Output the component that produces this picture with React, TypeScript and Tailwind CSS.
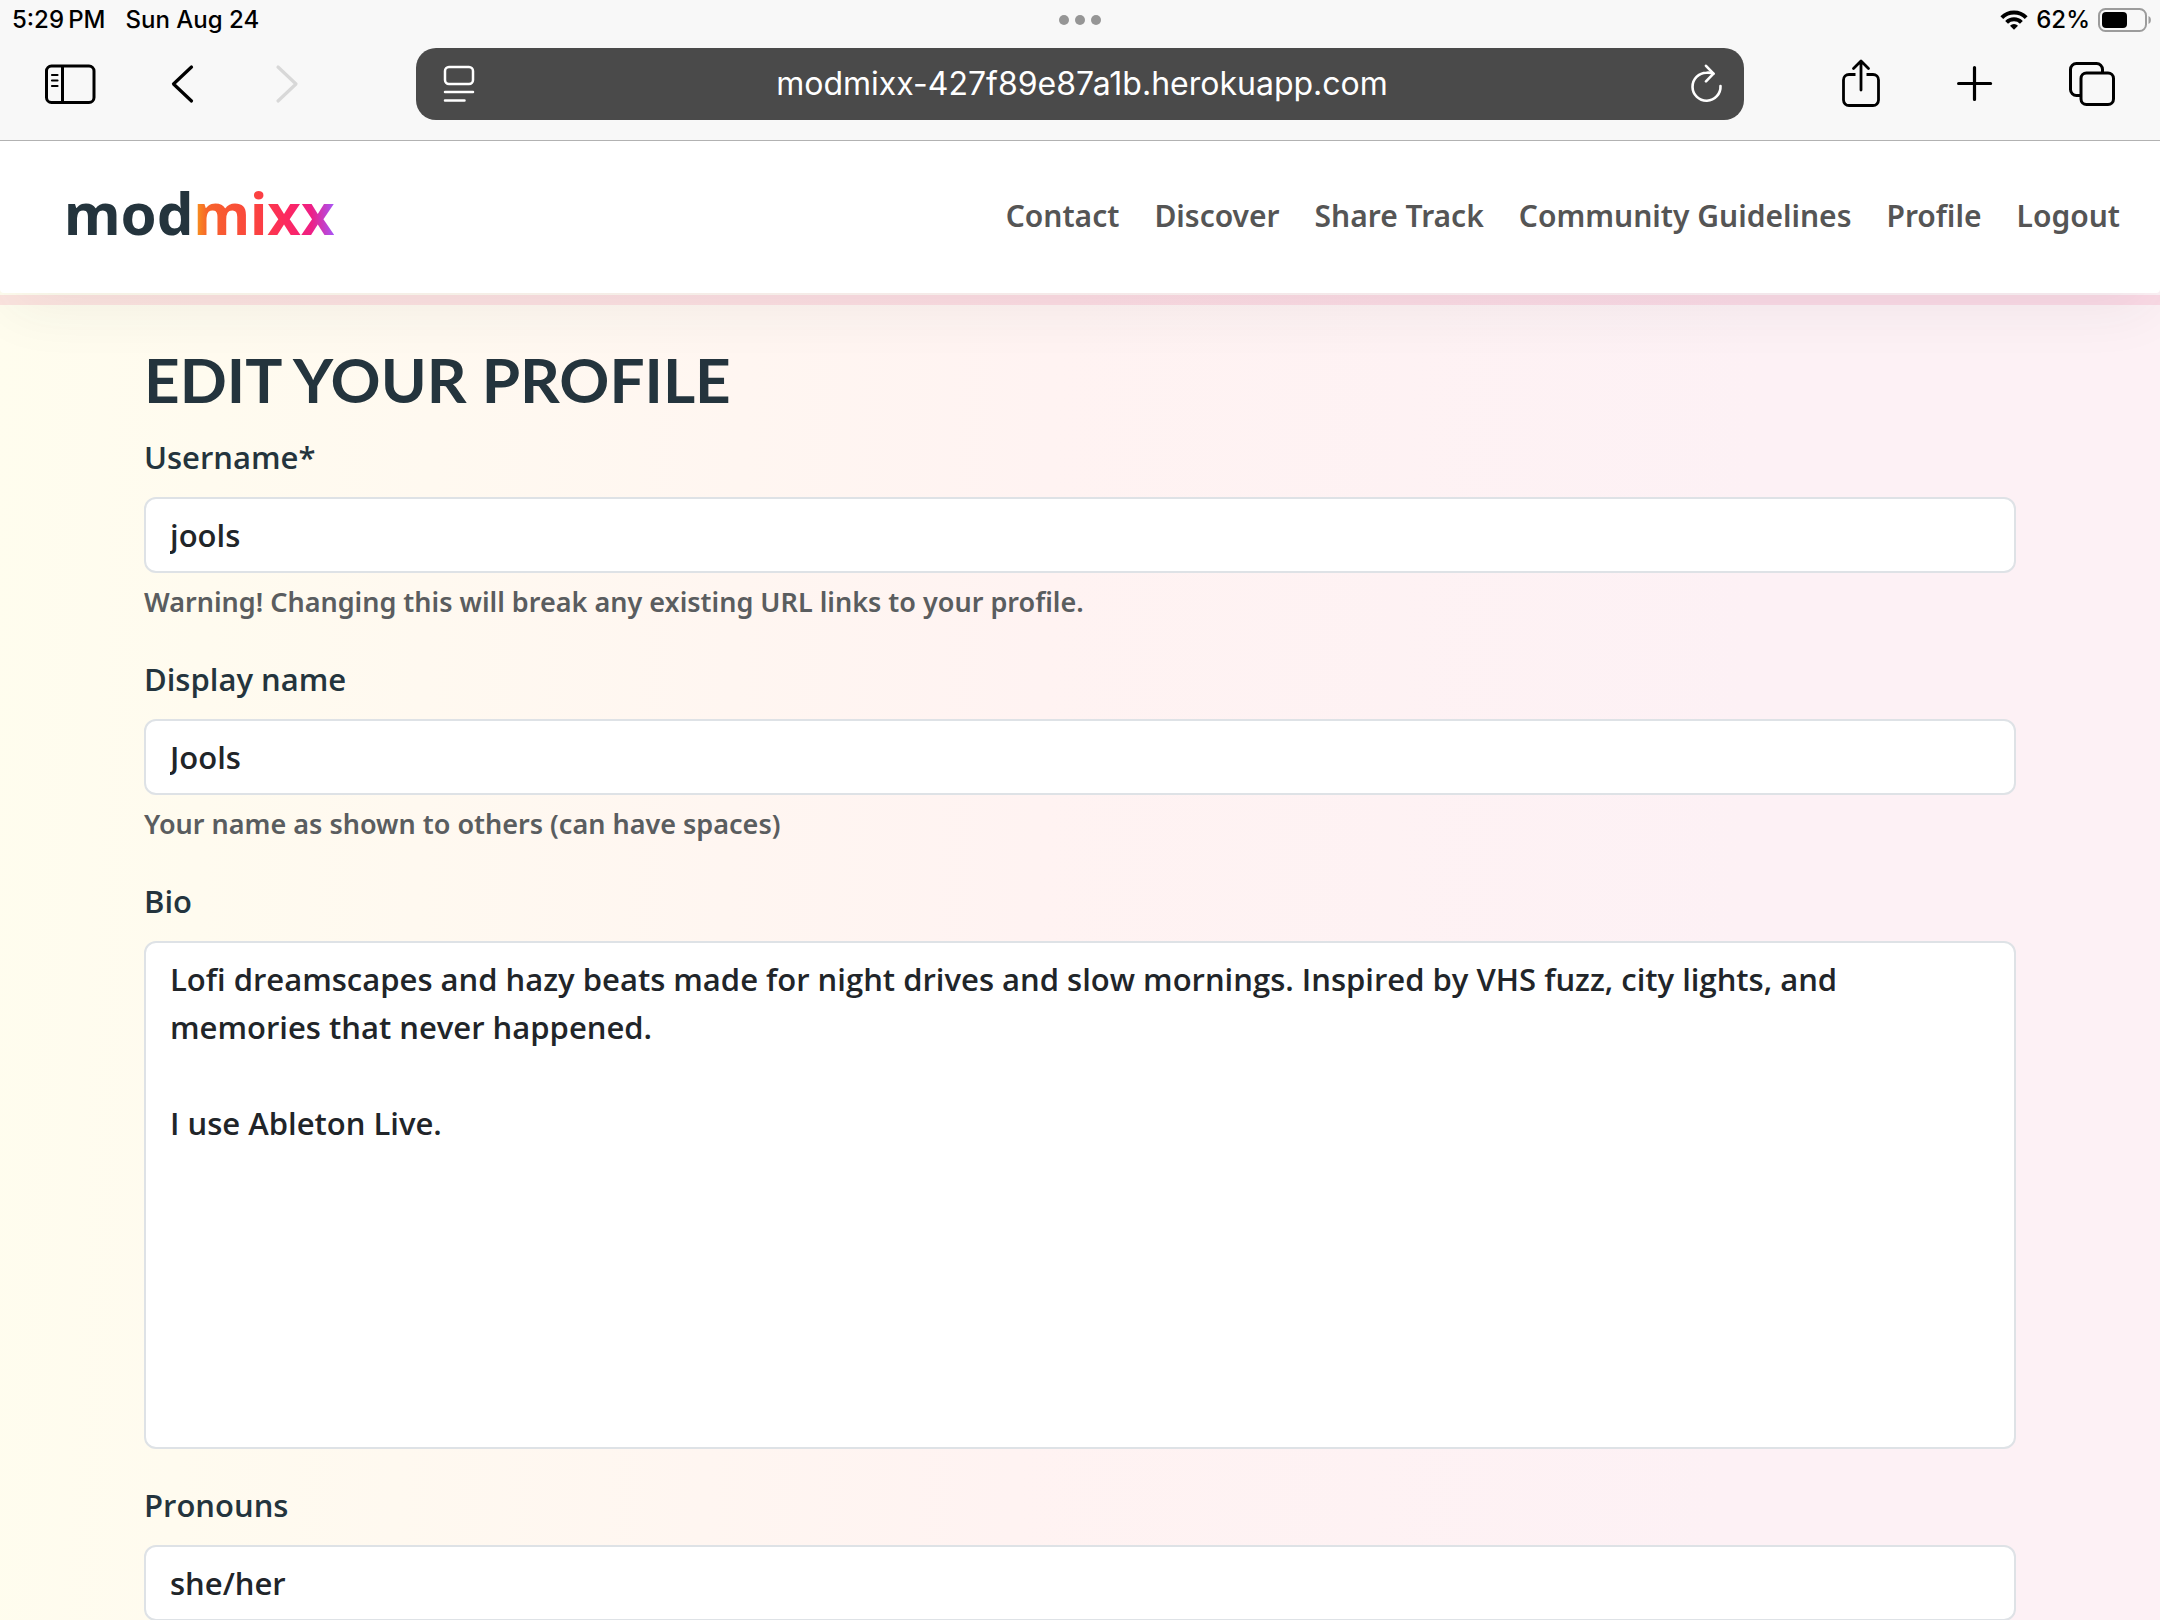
import type { ReactNode } from "react";

const bio = `Lofi dreamscapes and hazy beats made for night drives and slow mornings. Inspired by VHS fuzz, city lights, and memories that never happened.

I use Ableton Live.`;

const navLinks = ["Contact", "Discover", "Share Track", "Community Guidelines", "Profile", "Logout"];

const controlClass =
  "block w-full rounded-xl border-2 border-[#dee2e6] bg-white px-6 py-3 text-[31px] leading-[48px] font-semibold text-[#212529] outline-none";

function StatusBar() {
  return (
    <div className="grid h-10 grid-cols-3 items-center text-2xl font-medium text-black">
      <div className="flex gap-5 pl-3">
        <span>5:29&#8201;PM</span>
        <span>Sun Aug 24</span>
      </div>
      <div className="flex justify-center gap-1.5">
        <span className="size-2.5 rounded-full bg-[#969696]" />
        <span className="size-2.5 rounded-full bg-[#969696]" />
        <span className="size-2.5 rounded-full bg-[#969696]" />
      </div>
      <div className="flex items-center justify-end gap-2 pr-2">
        <svg width="28" height="20" viewBox="0 0 28 20" aria-hidden="true">
          <g fill="none" stroke="#000" strokeWidth="4">
            <path d="M1.8 7.6a17.3 17.3 0 0 1 24.4 0" />
            <path d="M6.6 12.4a10.5 10.5 0 0 1 14.8 0" />
          </g>
          <path d="M14 19.8l-4-4.1a5.7 5.7 0 0 1 8 0z" fill="#000" />
        </svg>
        <span>62%</span>
        <svg width="54" height="24" viewBox="0 0 54 24" aria-hidden="true">
          <rect x="1" y="1" width="47" height="22" rx="6.5" fill="none" stroke="#9c9c9c" strokeWidth="2" />
          <rect x="4" y="4" width="25" height="16" rx="4" fill="#000" />
          <path d="M50.500 8c3.2 1.2 3.2 6.800 0 8z" fill="#9c9c9c" />
        </svg>
      </div>
    </div>
  );
}

function IconButton({ label, children, disabled }: { label: string; children: ReactNode; disabled?: boolean }) {
  return (
    <button type="button" aria-label={label} disabled={disabled} className="shrink-0">
      {children}
    </button>
  );
}

function Toolbar() {
  return (
    <div className="grid grid-cols-[416px_1fr_416px] items-center pt-2 pb-5">
      <div className="flex items-center gap-[68px] pl-11">
        <IconButton label="Show sidebar">
          <svg width="52" height="40" viewBox="0 0 52 40" fill="none" stroke="#000" strokeWidth="3" strokeLinecap="round">
            <rect x="2.500" y="2" width="47.500" height="36.500" rx="5" />
            <path d="M18.500 2v36.500" strokeLinecap="butt" />
            <path d="M8 11h5.500M8 16.500h5.500M8 22h5.500" strokeWidth="2.200" />
          </svg>
        </IconButton>
        <IconButton label="Back">
          <svg width="36" height="40" viewBox="0 0 36 40" fill="none" stroke="#000" strokeWidth="3.200" strokeLinecap="round" strokeLinejoin="round">
            <path d="M27.500 3L9.500 20l18 17" />
          </svg>
        </IconButton>
        <IconButton label="Forward" disabled>
          <svg width="36" height="40" viewBox="0 0 36 40" fill="none" stroke="#d8d8d8" strokeWidth="3.200" strokeLinecap="round" strokeLinejoin="round">
            <path d="M10 3l18 17-18 17" />
          </svg>
        </IconButton>
      </div>
      <div className="flex h-[72px] items-center rounded-[20px] bg-[#4a4a4a] pr-5 pl-6 text-white">
        <IconButton label="Page menu">
          <svg width="36" height="40" viewBox="0 0 36 40" fill="none" stroke="#fff" strokeWidth="2.500" strokeLinecap="round">
            <rect x="5" y="3" width="28" height="17" rx="4" />
            <path d="M5 28h28M5 36.500h19.500" />
          </svg>
        </IconButton>
        <input
          aria-label="Address"
          defaultValue="modmixx-427f89e87a1b.herokuapp.com"
          className="min-w-0 flex-1 bg-transparent text-center text-[32px] leading-10 outline-none"
        />
        <IconButton label="Reload">
          <svg width="36" height="40" viewBox="0 0 36 40" fill="none" stroke="#fff" strokeWidth="2.600" strokeLinecap="round" strokeLinejoin="round">
            <path d="M25.500 9.600C23.500 8.800 21 8.500 18.500 8.700A14 14 0 1 0 32.500 22" />
            <path d="M18 1.800l7.500 7.800-7.500 7.800" />
          </svg>
        </IconButton>
      </div>
      <div className="flex items-center justify-end gap-[76px] pr-[45px]">
        <IconButton label="Share">
          <svg width="40" height="50" viewBox="0 0 40 50" fill="none" stroke="#000" strokeWidth="2.800" strokeLinecap="round" strokeLinejoin="round">
            <path d="M14.500 15.500H8a5.500 5.500 0 0 0-5.500 5.500v20A5.500 5.500 0 0 0 8 46.500h24a5.500 5.500 0 0 0 5.500-5.500V21a5.500 5.500 0 0 0-5.500-5.500h-6.500" strokeLinecap="butt" />
            <path d="M20 31V2.500M12.500 9.500L20 2l7.500 7.500" />
          </svg>
        </IconButton>
        <IconButton label="New tab">
          <svg width="36" height="40" viewBox="0 0 36 40" fill="none" stroke="#000" strokeWidth="3.200" strokeLinecap="round">
            <path d="M17.500 3.500v32M1.600 19.500h32" />
          </svg>
        </IconButton>
        <IconButton label="Tabs">
          <svg width="46" height="44" viewBox="0 0 46 44" fill="none" stroke="#000" strokeWidth="3">
            <path d="M12 33.500H7.500a6 6 0 0 1-6-6v-20a6 6 0 0 1 6-6h20a6 6 0 0 1 6 6V11" />
            <rect x="12" y="11" width="32.500" height="31.500" rx="5.500" />
          </svg>
        </IconButton>
      </div>
    </div>
  );
}

function SiteHeader() {
  return (
    <header className="relative z-10 flex items-center justify-between rounded-b-sm bg-white pr-10 pl-16 shadow-[0_24px_60px_-10px_rgba(40,60,60,0.07)]">
      <a href="#home" className="pt-7 pb-9 font-['Noto_Sans',sans-serif] text-[58px] leading-[88px] font-bold text-[#24343d]">
        mod
        <span className="bg-[linear-gradient(90deg,#f7a01a_0%,#f7642b_10%,#fb4240_45%,#fc2762_68%,#ee1f85_84%,#a855f7_100%)] bg-clip-text text-transparent">
          mixx
        </span>
      </a>
      <nav className="flex gap-[35px] font-['Noto_Sans',sans-serif] text-[30px] leading-[46px] font-semibold text-[#555]">
        {navLinks.map((link) => (
          <a key={link} href="#nav" className="pb-0.5">
            {link}
          </a>
        ))}
      </nav>
      <div className="absolute inset-x-0 top-full mt-0.5 h-2.5 bg-[rgba(235,60,120,0.13)]" />
    </header>
  );
}

function Field({ id, label, help, children }: { id: string; label: string; help?: string; children: ReactNode }) {
  return (
    <div className="mb-8">
      <label htmlFor={id} className="mb-4 block text-[31px] leading-[48px] font-semibold text-[#24343d]">
        {label}
      </label>
      {children}
      {help && (
        <p className="mt-2 font-['Noto_Sans',sans-serif] text-[27px] leading-[42px] font-semibold text-[#5a5d5f]">{help}</p>
      )}
    </div>
  );
}

export default function App() {
  return (
    <div className="flex h-screen flex-col overflow-hidden font-['Open_Sans',sans-serif]">
      <div className="shrink-0 border-b border-[#b2b2b2] bg-[#f8f8f8] font-['Inter',sans-serif]">
        <StatusBar />
        <Toolbar />
      </div>
      <div className="flex-1 overflow-hidden bg-[linear-gradient(92deg,#fffdee_0%,#fff9f0_20%,#fff3f2_48%,#fdf1f5_80%,#fdf1f5_100%)]">
        <SiteHeader />
        <main className="px-36 pt-12">
          <h1 className="mb-4 font-['Lato',sans-serif] text-[62px] leading-[76px] font-bold text-[#24343d]">EDIT YOUR PROFILE</h1>
          <form>
            <Field id="username" label="Username*" help="Warning! Changing this will break any existing URL links to your profile.">
              <input id="username" defaultValue="jools" className={controlClass} />
            </Field>
            <Field id="display" label="Display name" help="Your name as shown to others (can have spaces)">
              <input id="display" defaultValue="Jools" className={controlClass} />
            </Field>
            <Field id="bio" label="Bio">
              <textarea id="bio" rows={10} defaultValue={bio} className={`${controlClass} resize-none`} />
            </Field>
            <Field id="pronouns" label="Pronouns">
              <input id="pronouns" defaultValue="she/her" className={controlClass} />
            </Field>
          </form>
        </main>
      </div>
    </div>
  );
}
